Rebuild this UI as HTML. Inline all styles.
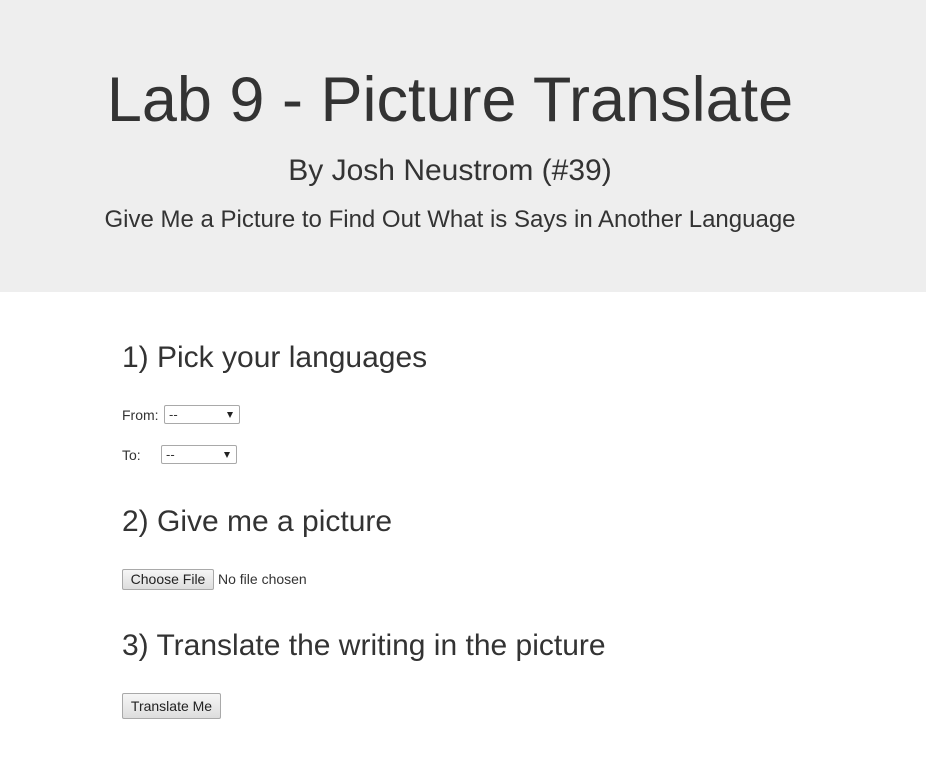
<!DOCTYPE html>
<html><head><style>
body{margin:0;width:926px;height:765px;background:#fff;font-family:"Liberation Sans",Arial,sans-serif;color:#333;position:relative;overflow:hidden}
.hd{position:absolute;left:0;top:0;width:926px;height:292px;background:#eee}
.a{position:absolute;white-space:nowrap;line-height:1}
.c{left:0;width:900px;text-align:center}
.sel{position:absolute;height:19px;border:1px solid #a9a9a9;border-radius:2px;background:#fff;box-sizing:border-box;font-size:13px;line-height:17px;padding-left:4px}
.sel:after{content:"";position:absolute;right:6px;top:6px;border-left:3.5px solid transparent;border-right:3.5px solid transparent;border-top:6px solid #222}
.btn{position:absolute;border:1px solid #a9a9a9;border-radius:2px;background:linear-gradient(#f6f6f6,#ddd);box-sizing:border-box;font-size:14px;text-align:center;color:#222}
</style></head><body>
<div class="hd"></div>
<div class="a c" style="top:69px;font-size:63px">Lab 9 - Picture Translate</div>
<div class="a c" style="top:156px;font-size:30px">By Josh Neustrom (#39)</div>
<div class="a c" style="top:208px;font-size:24px">Give Me a Picture to Find Out What is Says in Another Language</div>
<div class="a" style="left:122px;top:343px;font-size:30px">1) Pick your languages</div>
<div class="a" style="left:122px;top:408px;font-size:14px">From:</div>
<div class="sel" style="left:164px;top:405px;width:76px">--</div>
<div class="a" style="left:122px;top:448px;font-size:14px">To:</div>
<div class="sel" style="left:161px;top:445px;width:76px">--</div>
<div class="a" style="left:122px;top:507px;font-size:30px">2) Give me a picture</div>
<div class="btn" style="left:122px;top:569px;width:92px;height:21px;line-height:19px">Choose File</div>
<div class="a" style="left:218px;top:572px;font-size:14px">No file chosen</div>
<div class="a" style="left:122px;top:631px;font-size:30px">3) Translate the writing in the picture</div>
<div class="btn" style="left:122px;top:693px;width:99px;height:26px;line-height:24px">Translate Me</div>
</body></html>
